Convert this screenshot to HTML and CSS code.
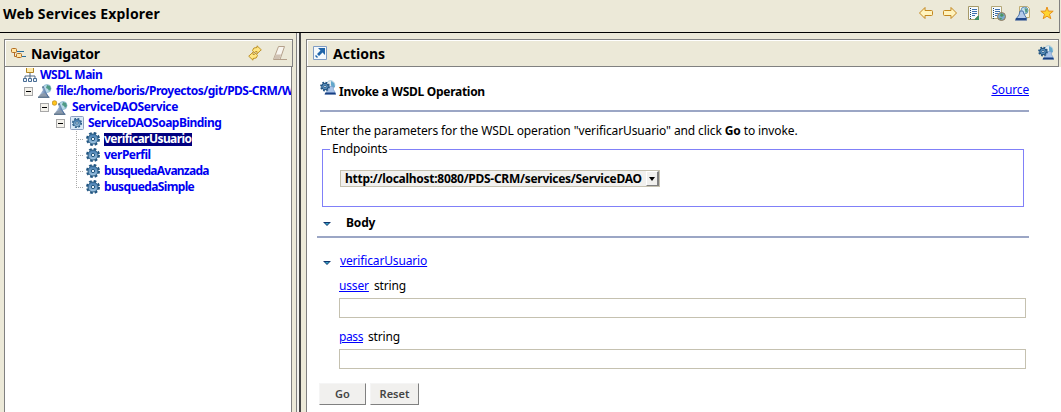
FILE: index.html
```
<!DOCTYPE html>
<html lang="en">
<head>
<meta charset="utf-8">
<title>Web Services Explorer</title>
<link rel="stylesheet" href="styles.css">
</head>
<body>
<svg class="defs" width="0" height="0" aria-hidden="true">
  <defs>
    <linearGradient id="blue" x1="0" y1="0" x2="0" y2="1"><stop offset="0" stop-color="#3f78ae"/><stop offset="1" stop-color="#a4c8e4"/></linearGradient>
    <linearGradient id="flask" x1="0" y1="0" x2="1" y2="0"><stop offset="0" stop-color="#dcebf7"/><stop offset="1" stop-color="#2c5590"/></linearGradient>
    <symbol id="gear" viewBox="0 0 14 14">
      <circle cx="7" cy="7" r="6" fill="none" stroke="#205583" stroke-width="2" stroke-dasharray="2.7 2.012"/>
      <circle cx="7" cy="7" r="5" fill="url(#blue)" stroke="#24587f"/>
      <circle cx="7" cy="7" r="1.700" fill="#e6f0f8" stroke="#24587f"/>
    </symbol>
    <symbol id="world" viewBox="0 0 14 14">
      <circle cx="9" cy="4.500" r="4" fill="#b9d9e9" stroke="#8ab5cf" stroke-width=".8"/>
      <path d="M9 1l3 1 1 3-2 2-1-2-2-1z" fill="#4f9a84"/>
      <path d="M4 3h2l1 2 1 3 3 5H0l3-4 2-3z" fill="url(#flask)"/>
      <path d="M3 10l4-1 3 4H0z" fill="#8b9aab"/>
      <path d="M4 3h2M0 13.300h11.500" stroke="#3a5876" stroke-width="1"/>
    </symbol>
    <symbol id="binding" viewBox="0 0 16 16">
      <circle cx="10.500" cy="5" r="4.300" fill="#e6edf0" stroke="#a9c9da"/>
      <path d="M11 1l3 2 1 4-3 1-1-3z" fill="#62a7cc"/>
      <path d="M9 6.500h4l.500 3 2.500 4.500H5l3-4z" fill="#a9c3e8" stroke="#6f93c4" stroke-width=".6"/>
      <path d="M5.500 12.500h9.500l1 2H4.500z" fill="#173f83"/>
      <circle cx="5" cy="6.500" r="4" fill="none" stroke="#205583" stroke-width="1.800" stroke-dasharray="1.700 1.442"/>
      <circle cx="5" cy="6.500" r="3.300" fill="#5990bd" stroke="#1d4c79"/>
      <circle cx="5" cy="6.500" r="1.200" fill="#e6f0f8" stroke="#1d4c79" stroke-width=".8"/>
    </symbol>
    <symbol id="twisty" viewBox="0 0 8 4"><path d="M0 0h8L4 4z" fill="#10366e"/><path d="M2 1h4L4 3z" fill="#36a3c4"/></symbol>
  </defs>
</svg>

<header class="topbar">
  <h1 class="topbar-title">Web Services Explorer</h1>
  <div class="toolbar">
    <svg width="16" height="16" viewBox="0 0 16 16"><path d="M1.500 8L7 2.500v3h6.500q1 0 1 1v3q0 1-1 1H7v3z" fill="#fff3bd" stroke="#c3871f"/></svg>
    <svg width="16" height="16" viewBox="0 0 16 16"><path d="M14.500 8L9 2.500v3H2.500q-1 0-1 1v3q0 1 1 1H9v3z" fill="#fff3bd" stroke="#c3871f"/></svg>
    <svg width="16" height="16" viewBox="0 0 16 16"><path d="M2.500 1.500h10v9l-4 4h-6z" fill="#f7fafc" stroke="#a79a68"/><path d="M6 4.500h5M6 6.500h5M6 8.500h5M6 10.500h3" stroke="#3c6fae"/><path d="M4.500 3v11" stroke="#17446c" stroke-dasharray="1 1"/><path d="M13 10v5H8z" fill="#3c9165"/></svg>
    <svg width="16" height="16" viewBox="0 0 16 16"><path d="M1.500 1.500h10v12h-10z" fill="#f7fafc" stroke="#b4a777"/><path d="M5 4.500h5M5 6.500h5M5 8.500h3M5 10.500h2" stroke="#3c6fae"/><path d="M3.500 3v11" stroke="#17446c" stroke-dasharray="1 1"/><circle cx="11.500" cy="11.500" r="4" fill="#79aacd" stroke="#927a58"/><path d="M11 8l3 2-2 2-2-1zM9 13l3 0-1 2z" fill="#4d965f"/></svg>
    <svg width="16" height="16" viewBox="0 0 16 16"><path d="M4.500 1.500h8l2 2v9h-10z" fill="#f9f5df" stroke="#c1ad72"/><circle cx="9.500" cy="5.500" r="3.500" fill="#c4e0ef" stroke="#6593be"/><path d="M9.500 3l3 1v3l-2 1z" fill="#549b83"/><path d="M5 6h3l1 3 3 5H1l3-4z" fill="#b4caea" stroke="#315f9d" stroke-width=".8"/><path d="M1 13h10l1 2.500H0z" fill="#21498d"/></svg>
    <svg width="16" height="16" viewBox="0 0 16 16"><path d="M8 2l1.400 4.100 4.800.1-3.700 3 1.300 4.500L8 11.200l-3.800 2.500 1.300-4.500-3.700-3 4.800-.1z" fill="#ffd531" stroke="#e8901b"/></svg>
  </div>
</header>

<main class="workspace">
  <section class="navigator">
    <div class="panel-head">
      <svg class="nav-icon" width="16" height="12" viewBox="0 0 16 12"><path d="M6 4.500h7M11 9.500h4" fill="none" stroke="#286e9c"/><path d="M3.500 6v3.500H6" fill="none" stroke="#b36d22"/><rect x=".5" y="1.500" width="5" height="4" rx="1" fill="#ffe6a6" stroke="#b36d22"/><rect x="5.500" y="6.500" width="5" height="4" rx="1" fill="#ffe6a6" stroke="#b36d22"/></svg>
      <h2 class="panel-title nav-title">Navigator</h2>
      <svg class="refresh" width="16" height="16" viewBox="0 0 16 16"><path d="M5.500 5.500Q6 2 10 2.500V.8l4.300 4-4.300 4V6.500Q8 6 7.500 8z" fill="#ffe684" stroke="#b88a1e" stroke-width=".9"/><path d="M10.500 10.500Q10 14 6 13.500v1.700l-4.300-4 4.300-4v2.300q2 .5 2.500-1.500z" fill="#ffe684" stroke="#b88a1e" stroke-width=".9"/></svg>
      <svg class="eraser" width="16" height="16" viewBox="0 0 16 16"><path d="M6.500 1.500h6L8 14.500H1.500z" fill="#f8f5ef" stroke="#b4a08b"/><path d="M3.500 9.500h5.700L7.500 14H2z" fill="#d0c2b3"/><path d="M6 14.500h9" stroke="#b4a08b"/></svg>
    </div>
    <div class="tree">
      <div class="row level-0"><svg width="16" height="15" viewBox="0 0 16 15"><path d="M8 5v3M3 11V8h10v3M8 8v3" fill="none" stroke="#536b84"/><path d="M4.500 0v4.500h7V0" fill="#ffebaa" stroke="#b18424"/><path d="M1.500 10.500h3v3h-3zM6.500 10.500h3v3h-3zM11.500 10.500h3v3h-3z" fill="#eef4fa" stroke="#476c94"/></svg><span class="label">WSDL Main</span></div>
      <div class="row level-1"><i class="toggle"></i><svg width="14" height="14"><use href="#world"/></svg><span class="label">file:/home/boris/Proyectos/git/PDS-CRM/W</span></div>
      <div class="row level-2"><i class="toggle"></i><svg width="16" height="15" viewBox="0 0 16 15"><use href="#world" x="2" y="1" width="14" height="14"/><circle cx="2.500" cy="3" r="2.300" fill="#ffc51d" stroke="#b98516" stroke-width=".7"/></svg><span class="label">ServiceDAOService</span></div>
      <div class="row level-3"><i class="toggle"></i><svg width="14" height="14" viewBox="0 0 14 14"><rect x=".5" y=".5" width="13" height="13" rx="1" fill="#dcebf8" stroke="#8d9fc0"/><use href="#gear" x="2" y="2" width="10" height="10"/></svg><span class="label">ServiceDAOSoapBinding</span></div>
      <div class="row leaf"><svg width="14" height="14"><use href="#gear"/></svg><span class="label selected">verificarUsuario</span></div>
      <div class="row leaf"><svg width="14" height="14"><use href="#gear"/></svg><span class="label">verPerfil</span></div>
      <div class="row leaf wide"><svg width="14" height="14"><use href="#gear"/></svg><span class="label tight">busquedaAvanzada</span></div>
      <div class="row leaf last"><svg width="14" height="14"><use href="#gear"/></svg><span class="label">busquedaSimple</span></div>
    </div>
  </section>
  <div class="splitter"></div>
  <section class="actions">
    <div class="panel-head">
      <svg class="action-icon" width="14" height="14" viewBox="0 0 14 14"><path d="M.5.500h13v13H.5z" fill="#f5f9fc" stroke="#7f9cc3"/><path d="M5 2h7v7L9.500 6.500 6 10l-2-2 3.500-3.500zM3 9l2 2-1 1-2-2z" fill="#2065a9"/></svg>
      <h2 class="panel-title action-title">Actions</h2>
      <svg class="head-end" width="16" height="16"><use href="#binding"/></svg>
    </div>
    <div class="content">
      <div class="operation"><svg width="16" height="16"><use href="#binding"/></svg><h3>Invoke a WSDL Operation</h3><a href="#source" class="source">Source</a></div>
      <p class="intro">Enter the parameters for the WSDL operation "verificarUsuario" and click <b>Go</b> to invoke.</p>
      <fieldset><legend>Endpoints</legend><div class="select"><span>http://localhost:8080/PDS-CRM/services/ServiceDAO</span><i class="drop"></i></div></fieldset>
      <div class="body-head"><svg width="8" height="4"><use href="#twisty"/></svg><h3>Body</h3></div>
      <div class="message"><svg width="8" height="4"><use href="#twisty"/></svg><a href="#message">verificarUsuario</a></div>
      <div class="field"><div class="field-label"><a href="#user">usser</a><span>string</span></div><input aria-label="usser"></div>
      <div class="field"><div class="field-label"><a href="#pass" class="tight">pass</a><span>string</span></div><input aria-label="pass"></div>
      <div class="buttons"><button class="go">Go</button><button class="reset">Reset</button></div>
    </div>
  </section>
</main>
</body>
</html>
```
FILE: styles.css
```
* { box-sizing: border-box; }
body { margin: 0; width: 1061px; height: 412px; overflow: hidden; background: #ece9d8; color: #000; font: 12px/16px "Noto Sans", sans-serif; letter-spacing: -0.15px; }
h1, h2, h3, p { margin: 0; }
svg { display: block; flex: none; }
.defs { position: absolute; }
a { color: #00f; text-decoration: underline; text-underline-offset: 1px; }
.topbar { width: 1060px; height: 33px; display: flex; border-bottom: 1px solid #000; border-right: 1px solid #808080; }
.topbar-title { font-size: 14px; line-height: 28px; padding-left: 3px; letter-spacing: 0.18px; }
.toolbar { display: flex; margin-left: auto; gap: 8.300px; padding: 5px 4px 0 0; }
.workspace { display: flex; height: 379px; }
.navigator { width: 289px; margin: 6px 3px 0 4px; flex: none; }
.panel-head { height: 28px; border: 1px solid #808080; display: flex; align-items: center; box-shadow: inset 1px 1px #fff; }
.panel-title { font-size: 14px; line-height: 20px; padding-top: 1px; }
.nav-icon { margin-left: 6px; }
.nav-title { margin-left: 4px; }
.refresh { margin-left: auto; }
.eraser { margin: 0 4px 0 9px; }
.tree { height: 345px; width: 288px; overflow: hidden; background: #fff; border: solid #808080; border-width: 0 1px; }
.row { display: flex; align-items: center; height: 16px; white-space: nowrap; color: #0000f0; font-weight: 700; }
.label { margin-left: 4px; line-height: 14px; letter-spacing: -0.5px; }
.level-0 { padding-left: 17px; }
.level-0 .label { margin-left: 2px; }
.level-1 { padding-left: 19px; }
.level-2 { padding-left: 35px; }
.level-2 svg { margin-left: -2px; }
.level-2 .label { letter-spacing: -0.35px; }
.level-3 { padding-left: 51px; }
.toggle { width: 9px; height: 9px; margin-right: 5px; border: 1px solid #a8a8a8; background: linear-gradient(#000,#000) center/5px 1px no-repeat #f4f2ec; flex: none; }
.leaf { padding-left: 81px; background: repeating-linear-gradient(#aaa 0 1px,transparent 1px 2px) 71px 0/1px 16px no-repeat, repeating-linear-gradient(90deg,#aaa 0 1px,transparent 1px 2px) 71px 8px/8px 1px no-repeat; }
.last { background-size: 1px 8px, 8px 1px; }
.label.tight { letter-spacing: -0.75px; }
.last .label { letter-spacing: -0.63px; }
.label.selected { background: #000080; color: #fff; height: 13px; line-height: 12px; letter-spacing: -0.56px; }
.splitter { width: 5px; border-left: 1px solid #808080; border-right: 2px solid #444; background: #f4f3ef; }
.actions { width: 753px; margin: 6px 0 0 5px; flex: none; }
.action-icon { margin-left: 6px; }
.action-title { margin-left: 6px; letter-spacing: 0; }
.head-end { margin: 0 4px 0 auto; }
.content { height: 345px; width: 755px; background: #fff; border-left: 1px solid #808080; padding: 13px 0 0 10px; }
.operation { width: 709px; height: 32px; margin-left: 3px; border-bottom: 2px solid #9ba6c5; display: flex; }
.operation h3 { font-size: 12px; line-height: 24px; margin-left: 3px; letter-spacing: -0.28px; }
.source { margin-left: auto; line-height: 20px; }
.intro { margin: 11px 0 0 3px; line-height: 16px; letter-spacing: -0.11px; }
fieldset { margin: 2px 0 0 5px; padding: 13px 17px 0; height: 66px; width: 702px; border: 1px solid #8080f8; }
legend { margin-left: -10px; padding: 0 2px; line-height: 16px; }
.select { height: 17px; width: 320px; border: 1px solid #c5c1b0; background: #f1f0ee; display: flex; padding-left: 4px; line-height: 15px; font-weight: 700; letter-spacing: -0.28px; white-space: nowrap; }
.drop { width: 13px; margin-left: auto; border: 1px solid; border-color: #fff #808080 #808080 #fff; border-right-width: 2px; display: flex; align-items: center; justify-content: center; }
.drop::after { content: ""; border: 3px solid transparent; border-top: 4px solid #000; border-bottom: 0; }
.body-head { width: 712px; height: 31px; border-bottom: 2px solid #9ba6c5; padding: 8px 0 0 6px; display: flex; }
.body-head h3 { font-size: 12px; margin-left: 15px; }
.body-head svg { margin-top: 7px; }
.message { height: 39px; padding: 15px 0 0 6px; display: flex; gap: 9px; }
.message svg { margin-top: 8px; }
.field { margin-left: 22px; height: 51px; }
.field-label { display: flex; gap: 5px; line-height: 18px; height: 21px; }
.field-label .tight { letter-spacing: -0.4px; }
input { display: block; width: 687px; height: 20px; border: 1px solid #c5c1b0; padding: 0; }
.buttons { display: flex; gap: 4px; margin: 4px 0 0 2px; }
button { height: 22px; padding: 0; border: 1px solid; border-color: #f5f5f5 #808080 #808080 #f5f5f5; background: #f1f0ee; color: #444; font: 600 11px/18px "Noto Sans", sans-serif; }
.go { width: 47px; }
.reset { width: 49px; }
```
